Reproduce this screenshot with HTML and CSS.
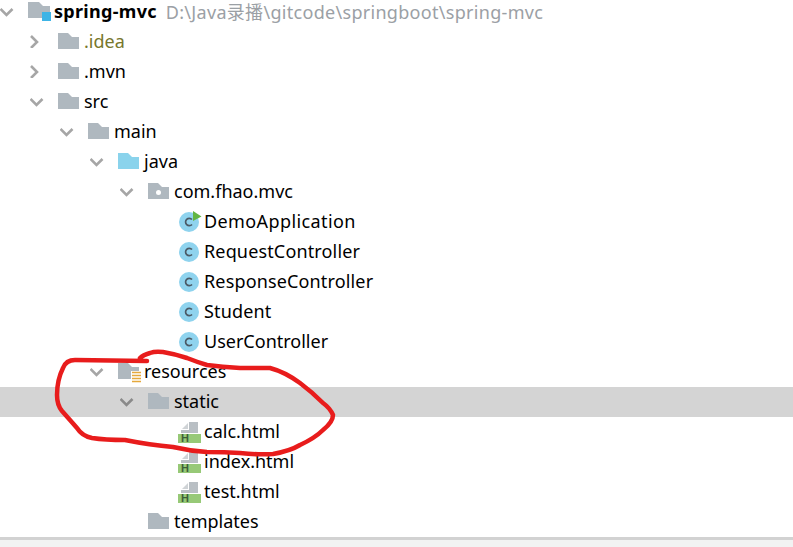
FILE: index.html
```html
<!DOCTYPE html>
<html>
<head>
    <meta charset="UTF-8">
    <title>spring-mvc</title>
    <link rel="stylesheet" href="styles.css">
</head>
<body>
<svg class="defs" width="0" height="0">
    <symbol id="folder" viewBox="0 0 26 24">
        <path d="M0 4H10L14 8H21V20H0Z"/>
    </symbol>
    <symbol id="down" viewBox="0 0 14 14">
        <path d="M.5 5L6.500 11L12.500 5" fill="none" stroke-width="2.6"/>
    </symbol>
    <symbol id="right" viewBox="0 0 14 14">
        <path d="M1 2L7 8L1 14" fill="none" stroke-width="2.600"/>
    </symbol>
    <symbol id="cls" viewBox="0 0 26 24">
        <circle class="cls" cx="11" cy="13" r="10"/>
        <path class="cls-c" d="M14 10.500A3.700 3.700 0 1 0 14 15.500"/>
    </symbol>
    <symbol id="html" viewBox="0 0 26 24" overflow="visible">
        <path class="doc-fold" d="M4 10L10 4V10Z"/>
        <path class="doc" d="M3 14V11H11V3H20V14Z"/>
        <rect class="doc-band" x="0" y="15" width="23" height="9"/>
    </symbol>
</svg>

<ul class="tree">
    <li class="row">
        <svg class="arrow"><use href="#down"/></svg>
        <svg class="icon grey" viewBox="0 0 26 24">
            <path d="M0 3H11L15 7H22V19H0Z"/>
            <rect class="module" x="14" y="13" width="9" height="9"/>
        </svg>
        <b class="name top">spring-mvc</b><span class="path">D:\Java录播\gitcode\springboot\spring-mvc</span>
    </li>
    <li class="row lv1">
        <svg class="arrow"><use href="#right"/></svg>
        <svg class="icon grey"><use href="#folder"/></svg>
        <span class="name ignored">.idea</span>
    </li>
    <li class="row lv1">
        <svg class="arrow"><use href="#right"/></svg>
        <svg class="icon grey"><use href="#folder"/></svg>
        <span class="name">.mvn</span>
    </li>
    <li class="row lv1">
        <svg class="arrow"><use href="#down"/></svg>
        <svg class="icon grey"><use href="#folder"/></svg>
        <span class="name">src</span>
    </li>
    <li class="row lv2">
        <svg class="arrow"><use href="#down"/></svg>
        <svg class="icon grey"><use href="#folder"/></svg>
        <span class="name">main</span>
    </li>
    <li class="row lv3">
        <svg class="arrow"><use href="#down"/></svg>
        <svg class="icon blue"><use href="#folder"/></svg>
        <span class="name">java</span>
    </li>
    <li class="row lv4">
        <svg class="arrow"><use href="#down"/></svg>
        <svg class="icon grey" viewBox="0 0 26 24">
            <path d="M0 4H10L14 8H21V20H0Z"/>
            <circle class="hole" cx="10.500" cy="13.500" r="2.500"/>
        </svg>
        <span class="name">com.fhao.mvc</span>
    </li>
    <li class="row lv5">
        <span class="arrow"></span>
        <svg class="icon" viewBox="0 0 26 24">
            <use href="#cls"/>
            <path class="run" d="M15 2L23.500 7.500L15 12Z"/>
        </svg>
        <span class="name wide">DemoApplication</span>
    </li>
    <li class="row lv5">
        <span class="arrow"></span>
        <svg class="icon"><use href="#cls"/></svg>
        <span class="name loose">RequestController</span>
    </li>
    <li class="row lv5">
        <span class="arrow"></span>
        <svg class="icon"><use href="#cls"/></svg>
        <span class="name loose">ResponseController</span>
    </li>
    <li class="row lv5">
        <span class="arrow"></span>
        <svg class="icon"><use href="#cls"/></svg>
        <span class="name loose">Student</span>
    </li>
    <li class="row lv5">
        <span class="arrow"></span>
        <svg class="icon"><use href="#cls"/></svg>
        <span class="name">UserController</span>
    </li>
    <li class="row lv3">
        <svg class="arrow"><use href="#down"/></svg>
        <svg class="icon" viewBox="0 0 26 24">
            <path class="folder-fill" d="M0 4H10L14 8H21V20H0Z"/>
            <rect class="res-gap" x="13" y="12" width="10" height="12"/>
            <path class="res-bars" d="M14 13.500H23M14 16.500H23M14 19.500H23M14 22.500H23"/>
        </svg>
        <span class="name">resources</span>
    </li>
    <li class="row lv4 selected">
        <svg class="arrow"><use href="#down"/></svg>
        <svg class="icon grey"><use href="#folder"/></svg>
        <span class="name">static</span>
    </li>
    <li class="row lv5">
        <span class="arrow"></span>
        <svg class="icon" viewBox="0 0 26 24">
            <use href="#html"/>
            <text class="doc-h" x="3" y="23">H</text>
        </svg>
        <span class="name">calc.html</span>
    </li>
    <li class="row lv5">
        <span class="arrow"></span>
        <svg class="icon" viewBox="0 0 26 24">
            <use href="#html"/>
            <text class="doc-h" x="3" y="23">H</text>
        </svg>
        <span class="name">index.html</span>
    </li>
    <li class="row lv5">
        <span class="arrow"></span>
        <svg class="icon" viewBox="0 0 26 24">
            <use href="#html"/>
            <text class="doc-h" x="3" y="23">H</text>
        </svg>
        <span class="name">test.html</span>
    </li>
    <li class="row lv4">
        <svg class="arrow hidden"></svg>
        <svg class="icon grey"><use href="#folder"/></svg>
        <span class="name">templates</span>
    </li>
</ul>
<div class="bottom"></div>

<!-- hand drawn circle on top of the screenshot -->
<svg class="scribble" width="793" height="547" viewBox="0 0 793 547">
    <path d="M147 361L75 360Q66 360 63 368Q57 380 57 395Q57 405 62 411Q70 420 77 428Q82 436 92 438Q105 440 125 440Q150 445 173 447Q190 451 207 452Q225 452 240 453Q258 455 273 454Q290 451 300 445Q315 438 323 430Q333 422 333 415Q330 408 323 403Q312 392 300 383Q285 372 270 368Q255 368 240 368Q222 367 207 365Q197 362 187 358Q175 354 163 352Q155 351 150 353Q143 355 140 358"/>
</svg>
</body>
</html>
```

FILE: styles.css
```css
* {
    margin: 0;
    padding: 0;
    box-sizing: border-box;
}

html, body {
    height: 100%;
}

body {
    position: relative;
    display: flex;
    flex-direction: column;
    overflow: hidden;
    background: #fff;
    font-family: "Noto Sans", "Noto Sans CJK SC", sans-serif;
    font-size: 18px;
    color: #000;
}

.defs {
    position: absolute;
}

.tree {
    margin-top: -3px;
    list-style: none;
}

.row {
    display: flex;
    align-items: center;
    height: 30px;
    padding-bottom: 2px;
    white-space: nowrap;
}

.lv1 { padding-left: 30px; }
.lv2 { padding-left: 60px; }
.lv3 { padding-left: 90px; }
.lv4 { padding-left: 120px; }
.lv5 { padding-left: 150px; }

.selected {
    background: #d4d4d4;
}

.arrow {
    flex: none;
    width: 14px;
    height: 14px;
    margin-right: 14px;
    overflow: visible;
    stroke: #a6a6a6;
}

.selected .arrow {
    stroke: #8a8a8a;
}

.hidden {
    visibility: hidden;
}

.icon {
    flex: none;
    width: 26px;
    height: 24px;
    overflow: visible;
}

.grey { fill: #afb8bf; }
.blue { fill: #8ad3ec; }
.folder-fill { fill: #afb8bf; }
.module { fill: #3db4e6; }
.hole { fill: #fff; }

.cls { fill: #8fd3ee; }

.cls-c {
    fill: none;
    stroke: #4b5a66;
    stroke-width: 1.7;
}

.run { fill: #62b543; }

.res-gap { fill: #fff; }

.res-bars {
    fill: none;
    stroke: #e5a93c;
    stroke-width: 1.6;
}

.doc { fill: #b9bfc4; }
.doc-fold { fill: #cfd3d6; }
.doc-band { fill: #97c977; }

.doc-h {
    font-family: "Liberation Sans", sans-serif;
    font-size: 11px;
    font-weight: bold;
    fill: #3d5f3a;
}

.top { letter-spacing: .3px; }
.wide { letter-spacing: .4px; }
.loose { letter-spacing: .15px; }

.ignored {
    color: #77772c;
}

.path {
    margin-left: 9px;
    letter-spacing: .3px;
    color: #9ba0a5;
}

.bottom {
    flex: 1;
    border-top: 3px solid #d2d2d2;
    background: #f2f2f2;
}

.scribble {
    position: absolute;
    top: 0;
    left: 0;
    fill: none;
    stroke: #e81c1c;
    stroke-width: 4.5;
    stroke-linecap: round;
    stroke-linejoin: round;
}
```
